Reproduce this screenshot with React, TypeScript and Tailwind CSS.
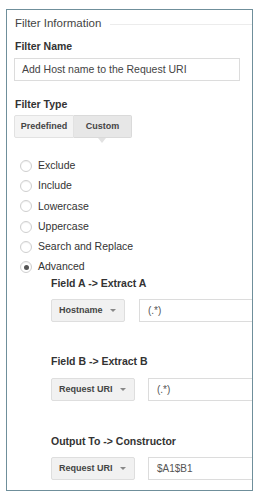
import React from 'react';

const font = { fontFamily: '"Liberation Sans", Arial, sans-serif' };

const filterTypes = ['Exclude', 'Include', 'Lowercase', 'Uppercase', 'Search and Replace', 'Advanced'];

const Dropdown: React.FC<{ label: string; width: string }> = ({ label, width }) => (
  <div
    className={`${width} h-[23px] shrink-0 flex items-center justify-between pl-[7px] pr-[8px] bg-[#f1f1f1] border border-[#dedede] rounded-[2px] text-[9px] font-bold text-[#444] whitespace-nowrap`}
  >
    <span>{label}</span>
    <span className="w-0 h-0 border-l-[3px] border-r-[3px] border-t-[3px] border-l-transparent border-r-transparent border-t-[#888]" />
  </div>
);

const FieldRow: React.FC<{ label: string; width: string; gap: string; value: string }> = ({ label, width, gap, value }) => (
  <div className={`flex ${gap} w-[260px]`}>
    <Dropdown label={label} width={width} />
    <div className="flex-1 h-[23px] flex items-center pl-[8px] border border-[#dcdcdc] bg-white text-[10px] text-[#555]">
      {value}
    </div>
  </div>
);

export default function App() {
  return (
    <div className="w-[259px] h-[498px] bg-white pt-[9px] pl-[6px]" style={font}>
      <div className="w-[247px] h-[482px] border border-[#6f8f9b] overflow-hidden pl-[7px]">
        {/* Section heading */}
        <div className="h-[28px] flex items-center pl-[1px]">
          <span className="text-[11.5px] text-[#444]">Filter Information</span>
          <div className="flex-1 h-px bg-[#ececec] ml-[9px]" />
        </div>

        <div className="h-[17px] flex items-center pl-[1px] text-[10.5px] font-bold text-[#333]">Filter Name</div>
        <div className="mt-[3px] w-[226px] h-[23px] flex items-center pl-[7px] border border-[#dcdcdc] text-[10.5px] text-[#444]">
          Add Host name to the Request URI
        </div>

        <div className="mt-[15px] h-[17px] flex items-center pl-[1px] text-[10.5px] font-bold text-[#333]">Filter Type</div>
        <div className="mt-[2px] flex h-[23px] text-[9px] font-bold text-[#444]">
          <div className="w-[60px] flex items-center justify-center bg-[#f4f4f4] border border-[#e2e2e2] rounded-l-[2px]">
            Predefined
          </div>
          <div className="relative w-[58px] flex items-center justify-center bg-[#e7e7e7] border border-l-0 border-[#dadada] rounded-r-[2px]">
            Custom
            <span className="absolute left-[24px] top-[22px] w-0 h-0 border-l-[4px] border-r-[4px] border-t-[5px] border-l-transparent border-r-transparent border-t-[#e2e2e2]" />
          </div>
        </div>

        {/* Radio list */}
        <div className="mt-[18px]">
          {filterTypes.map((t) => (
            <div key={t} className="h-[20.2px] flex items-center pl-[6px] gap-[6px] text-[10.5px] text-[#333]">
              <span className="w-[12px] h-[12px] rounded-full border border-[#cfcfcf] bg-white flex items-center justify-center shadow-[inset_0_1px_1px_rgba(0,0,0,0.06)]">
                {t === 'Advanced' && <span className="w-[5px] h-[5px] rounded-full bg-[#555]" />}
              </span>
              <span>{t}</span>
            </div>
          ))}
        </div>

        {/* Advanced options */}
        <div className="ml-[37px]">
          <div className="-mt-[1px] h-[16px] flex items-center text-[10.5px] font-bold text-[#333]">Field A -&gt; Extract A</div>
          <div className="mt-[7px]">
            <FieldRow label="Hostname" width="w-[74px]" gap="gap-[14px]" value="(.*)" />
          </div>

          <div className="mt-[32px] h-[16px] flex items-center text-[10.5px] font-bold text-[#333]">Field B -&gt; Extract B</div>
          <div className="mt-[8px]">
            <FieldRow label="Request URI" width="w-[84px]" gap="gap-[13px]" value="(.*)" />
          </div>

          <div className="mt-[33px] h-[16px] flex items-center text-[10.5px] font-bold text-[#333]">Output To -&gt; Constructor</div>
          <div className="mt-[7px]">
            <FieldRow label="Request URI" width="w-[84px]" gap="gap-[13px]" value="$A1$B1" />
          </div>
        </div>
      </div>
    </div>
  );
}
